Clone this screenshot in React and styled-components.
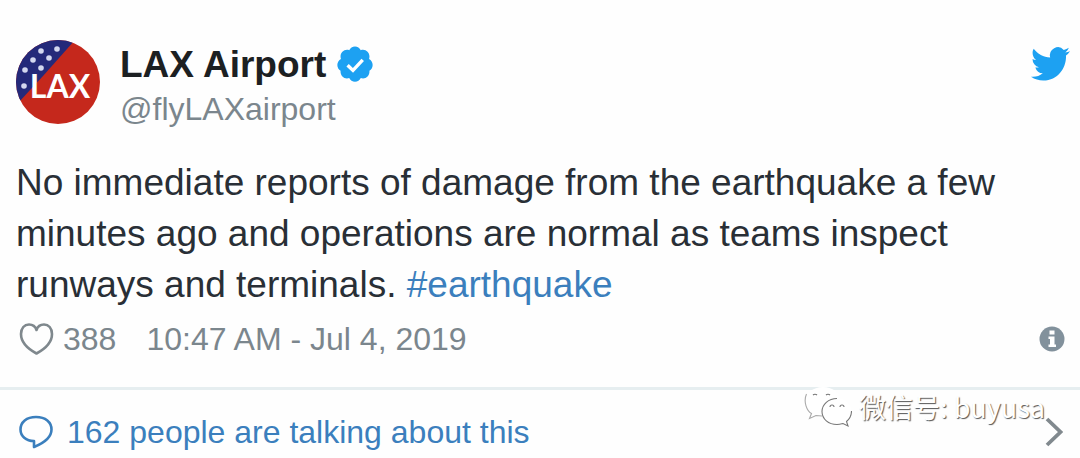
import React from "react";
import styled, { createGlobalStyle } from "styled-components";

const GlobalStyle = createGlobalStyle`
  * {
    box-sizing: border-box;
  }

  body {
    margin: 0;
    background-color: #fefefe;
    font-family: "Liberation Sans", Arial, sans-serif;
  }
`;

const Tweet = styled.article`
  position: relative;
  padding-top: 40px;
  color: #292f36;
`;

const Header = styled.header`
  display: flex;
  align-items: flex-start;
  padding: 0 10px 0 16px;

  > svg {
    flex: none;
  }
`;

const Author = styled.a`
  display: flex;
  flex: 1;
  gap: 20px;
  color: inherit;
  text-decoration: none;
`;

const Names = styled.div`
  display: flex;
  flex-direction: column;
  padding-top: 3px;
`;

const Name = styled.span`
  display: flex;
  align-items: center;
  gap: 11px;
  font-size: 37px;
  font-weight: 700;
  line-height: 44px;
  color: #1c2022;
`;

const Handle = styled.span`
  font-size: 32px;
  line-height: 44px;
  color: #7b868d;
`;

const Body = styled.p`
  margin: 0;
  padding: 26px 80px 0 16px;
  font-size: 37px;
  line-height: 51px;
`;

const Hashtag = styled.a`
  color: #3b7fbd;
  text-decoration: none;
`;

const Meta = styled.div`
  display: flex;
  align-items: center;
  gap: 30px;
  padding: 7px 15px 26px 19px;
  font-size: 32px;
  line-height: 44px;
  color: #7b868d;
`;

const LikeButton = styled.button`
  display: flex;
  align-items: center;
  gap: 9px;
  padding: 0;
  border: 0;
  background: none;
  font: inherit;
  color: inherit;
  cursor: pointer;
`;

const InfoLink = styled.a`
  display: flex;
  margin-left: auto;
`;

const Footer = styled.a`
  display: flex;
  align-items: center;
  gap: 14px;
  padding: 20px 17px 5px 19px;
  border-top: 3px solid #e6eef0;
  font-size: 32px;
  line-height: 44px;
  color: #3b7fbd;
  text-decoration: none;

  > svg:last-child {
    margin-left: auto;
  }
`;

const Watermark = styled.div`
  position: absolute;
  top: 386px;
  right: 35px;
  display: flex;
  align-items: center;
  gap: 7px;
  font-family: "Noto Sans CJK SC", sans-serif;
  font-size: 27px;
  line-height: 42px;
  color: #fff;
  text-shadow: 1px 1px 1px #555;
  pointer-events: none;
`;

const AvatarText = styled.text`
  font-family: Lato, sans-serif;
  font-size: 32px;
  font-weight: 700;
  fill: #fff;
`;

const stars = [
  [41, 9], [25, 11], [33, 18], [17, 20], [25, 28], [9, 30], [8, 46],
];

const Avatar = () => (
  <svg width="84" height="84" viewBox="0 0 84 84" role="img" aria-label="LAX">
    <clipPath id="round">
      <circle cx="42" cy="42" r="42" />
    </clipPath>
    <g clipPath="url(#round)">
      <rect width="84" height="84" fill="#c5281c" />
      <path d="M0 0H59L27 36L3 62H0Z" fill="#24297a" />
      {stars.map(([x, y]) => (
        <circle key={`${x}-${y}`} cx={x} cy={y} r="2.8" fill="#d3d7ef" />
      ))}
      <AvatarText x="44" y="58" textAnchor="middle">LAX</AvatarText>
    </g>
  </svg>
);

const Verified = () => (
  <svg width="36" height="36" viewBox="1.3 1.8 21.400 21.400" overflow="visible" role="img" aria-label="Verified">
    <path
      fill="#1da1f2"
      d="M22.5 12.5c0-1.58-.875-2.95-2.148-3.6.154-.435.238-.905.238-1.4 0-2.21-1.71-3.998-3.818-3.998-.47 0-.92.084-1.336.25C14.818 2.415 13.51 1.5 12 1.5s-2.816.917-3.437 2.25c-.415-.165-.866-.25-1.336-.25-2.11 0-3.818 1.79-3.818 4 0 .494.083.964.237 1.4-1.272.65-2.147 2.018-2.147 3.6 0 1.495.782 2.798 1.942 3.486-.02.17-.032.34-.032.514 0 2.21 1.708 4 3.818 4 .47 0 .92-.086 1.335-.25.62 1.334 1.926 2.25 3.437 2.25 1.512 0 2.818-.916 3.437-2.25.415.163.865.248 1.336.248 2.11 0 3.818-1.79 3.818-4 0-.174-.012-.344-.033-.513 1.158-.687 1.943-1.99 1.943-3.484z"
    />
    <path d="M7.6 12.6l3.2 3.1 5.800-6.300" fill="none" stroke="#fff" strokeWidth="2" />
  </svg>
);

const Bird = () => (
  <svg width="39" height="46" viewBox="0 -2 24 27" preserveAspectRatio="none" role="img" aria-label="Twitter">
    <path
      fill="#1da1f2"
      d="M23.953 4.57a10 10 0 01-2.825.775 4.958 4.958 0 002.163-2.723c-.951.555-2.005.959-3.127 1.184a4.92 4.92 0 00-8.384 4.482C7.69 8.095 4.067 6.13 1.64 3.162a4.822 4.822 0 00-.666 2.475c0 1.71.87 3.213 2.188 4.096a4.904 4.904 0 01-2.228-.616v.06a4.923 4.923 0 003.946 4.827 4.996 4.996 0 01-2.212.085 4.936 4.936 0 004.604 3.417 9.867 9.867 0 01-6.102 2.105c-.39 0-.779-.023-1.17-.067a13.995 13.995 0 007.557 2.209c9.053 0 13.998-7.496 13.998-13.985 0-.21 0-.42-.015-.63A9.935 9.935 0 0024 4.59z"
    />
  </svg>
);

const Heart = () => (
  <svg width="35" height="34" viewBox="0 0 35 34" aria-hidden="true">
    <path
      d="M17.500 31.500C11 28 2 21 2 12C2 6 5.500 2.500 10 2.500C13.500 2.500 16.500 5 17.500 8C18.500 5 21.500 2.500 25 2.500C29.500 2.500 33 6 33 12C33 21 24 28 17.500 31.500Z"
      fill="none"
      stroke="#7f888d"
      strokeWidth="2.600"
      strokeLinejoin="round"
    />
  </svg>
);

const Info = () => (
  <svg width="26" height="26" viewBox="0 0 26 26" aria-hidden="true">
    <circle cx="13" cy="13" r="12.500" fill="#82919c" />
    <path d="M10.500 4.500h5v4h-5zM9.500 10.500h6v8h1.500v2.500h-7.500v-2.500h1.500v-5.500h-1.500z" fill="#fff" />
  </svg>
);

const Bubble = () => (
  <svg width="34" height="34" viewBox="0 0 34 34" aria-hidden="true">
    <path
      d="M15 26C7 26 1.500 21 1.500 14.500C1.500 7 7.500 2 17 2C26.500 2 32.500 7 32.500 14.500C32.500 22 25 28 15 32Z"
      fill="none"
      stroke="#3b7fbd"
      strokeWidth="2.600"
      strokeLinejoin="round"
    />
  </svg>
);

const Chevron = () => (
  <svg width="18" height="30" viewBox="0 0 18 30" aria-hidden="true">
    <path d="M2 2L15.500 15L2 28" fill="none" stroke="#81898e" strokeWidth="3.800" />
  </svg>
);

const WeChat = () => (
  <svg width="48" height="42" viewBox="0 0 48 42" aria-hidden="true">
    <path
      d="M19 1C9 1 1 7.500 1 16C1 21 3.500 25 7.500 27.500L5.500 32.500L12 29.500C14 30 16 30.500 19 30.500C29 30.500 37 24 37 16C37 7.500 29 1 19 1Z"
      fill="#fff"
    />
    <path
      d="M33 12.500C24.500 12.500 18 18.500 18 25.500C18 33 24.500 38.500 33 38.500C35 38.500 37 38 39 37.500L44 40L42.500 35.500C45.500 33 47.500 29.500 47.500 25.500C47.500 18.500 41 12.500 33 12.500Z"
      fill="#fff"
    />
    <g fill="none" stroke="#777" strokeWidth="1.100">
      <path d="M2.500 8C-1 16 3 25 7.500 27.500L5.500 32.500L12 29.500L18 30" stroke="#aaa" />
      <path d="M33 12.500C24.500 12.500 18 18.500 18 25.500C18 33 24.500 38.500 33 38.500C35 38.500 37 38 39 37.500L44 40L42.500 35.500C45.500 33 47.500 29.500 47.500 25" />
      <path d="M9 9a2.500 2 0 0 1 4 0M22 9a2.500 2 0 0 1 4 0M26 21a2 2 0 0 1 4 0M36 21a2 2 0 0 1 4 0" />
    </g>
  </svg>
);

export default function App() {
  return (
    <>
      <GlobalStyle />
      <Tweet>
        <Header>
          <Author href="#profile">
            <Avatar />
            <Names>
              <Name>
                LAX Airport
                <Verified />
              </Name>
              <Handle>@flyLAXairport</Handle>
            </Names>
          </Author>
          <Bird />
        </Header>
        <Body>
          No immediate reports of damage from the earthquake a few minutes ago
          and operations are normal as teams inspect runways and
          terminals. <Hashtag href="#earthquake">#earthquake</Hashtag>
        </Body>
        <Meta>
          <LikeButton type="button" aria-label="Like, 388">
            <Heart />
            388
          </LikeButton>
          <time dateTime="2019-07-04T10:47">10:47 AM - Jul 4, 2019</time>
          <InfoLink href="#info" aria-label="Info">
            <Info />
          </InfoLink>
        </Meta>
        <Footer href="#replies">
          <Bubble />
          162 people are talking about this
          <Chevron />
        </Footer>
        <Watermark>
          <WeChat />
          微信号: buyusa
        </Watermark>
      </Tweet>
    </>
  );
}
